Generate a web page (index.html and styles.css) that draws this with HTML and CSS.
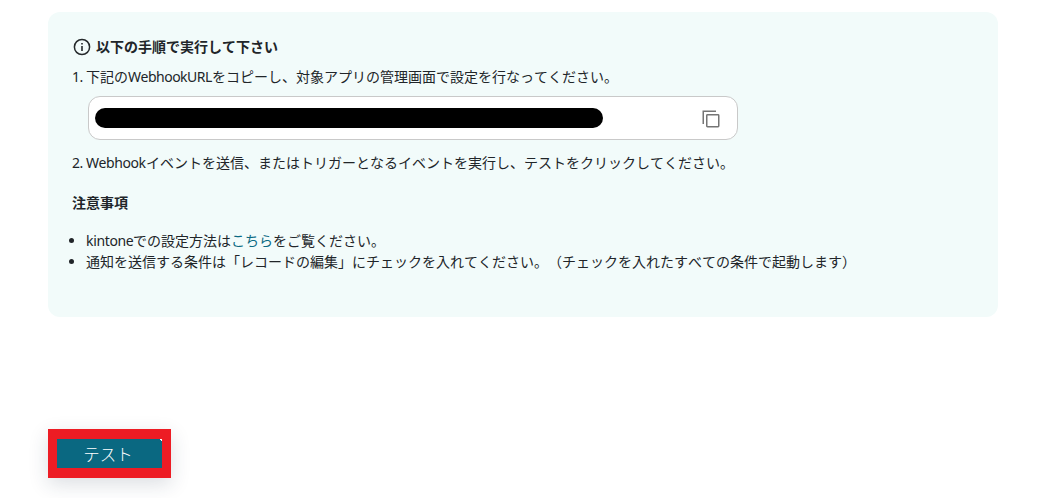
FILE: index.html
```html
<!DOCTYPE html>
<html lang="ja">
<head>
<meta charset="utf-8">
<title>Webhook設定</title>
<link rel="stylesheet" href="styles.css">
</head>
<body>
<main class="page">
  <section class="panel">
    <h2 class="title">
      <svg class="info-icon" viewBox="0 0 18 18" width="18" height="18"><circle cx="9" cy="9" r="7.6" fill="none" stroke="#25292b" stroke-width="1.5"/><path d="M8.2 8h1.6v5H8.2zM8.2 5h1.6v1.6H8.2z" fill="#25292b"/></svg>
      <span>以下の手順で実行して下さい</span>
    </h2>
    <p class="step"><span class="num">1.</span>下記の<span class="latin-url">WebhookURL</span>をコピーし、対象アプリの管理画面で設定を行なってください。</p>
    <div class="url-box">
      <span class="mask"></span>
      <svg class="copy-icon" viewBox="0 0 18 18" width="18" height="18" fill="none" stroke="#757575" stroke-width="1.5"><path d="M1.25 14V1.25H14"/><rect x="4.75" y="4.75" width="12" height="12" rx=".7"/></svg>
    </div>
    <p class="step step-two"><span class="num">2.</span><span class="latin-hook">Webhook</span>イベントを送信、またはトリガーとなるイベントを実行し、テストをクリックしてください。</p>
    <h3 class="subtitle">注意事項</h3>
    <ul class="notes">
      <li><span class="latin-kintone">kintone</span>での設定方法は<a class="link">こちら</a>をご覧ください。</li>
      <li>通知を送信する条件は「レコードの編集」にチェックを入れてください。（チェックを入れたすべての条件で起動します）</li>
    </ul>
  </section>
  <button class="test-button">テスト</button>
</main>
</body>
</html>
```
FILE: styles.css
```css
* { box-sizing: border-box; }
body { margin: 0; background: #fff; color: #212529; font: 14px/21px "Noto Sans", "Noto Sans CJK JP", sans-serif; font-kerning: none; text-spacing-trim: space-all; }
.page { padding: 12px 53px 0 48px; height: 498px; overflow: hidden; }
.panel { height: 305px; padding: 24px; border-radius: 12px; background: #f2fbfa; white-space: nowrap; }
.title { display: flex; align-items: center; gap: 5px; height: 21px; margin: 0 0 9px 1px; font-size: 14px; line-height: 21px; }
.title span { font-family: "Noto Sans CJK JP", sans-serif; }
.step { margin: 0; height: 21px; }
.num, .latin-url, .latin-hook, .latin-kintone { display: inline-block; }
.num { width: 14px; letter-spacing: -.6px; }
.latin-url { width: 84px; letter-spacing: -.5px; }
.latin-hook { width: 60px; letter-spacing: -.45px; }
.latin-kintone { width: 47px; letter-spacing: -.35px; }
.url-box { display: flex; align-items: center; justify-content: space-between; width: 650px; height: 44px; margin: 9px 0 12px 16px; padding: 0 17px 0 6px; border: 1px solid #c9c9c9; border-radius: 12px; background: #fff; }
.mask { width: 508px; height: 20px; border-radius: 10px; background: #000; }
.copy-icon { margin-top: 2px; }
.subtitle { margin: 19px 0 17px; font-size: 14px; line-height: 21px; }
.notes { margin: 0; padding-left: 14px; }
.link { color: #0b6a83; }
.test-button { display: block; width: 123px; height: 49px; margin-top: 112px; padding: 1px 3px 0 0; border: 9px solid #ed1c24; border-top-width: 10px; border-bottom-width: 10px; background: linear-gradient(225deg, #fff 1.5px, #0a6881 2px) padding-box; color: #fff; font: 300 16.5px/28px "Noto Sans CJK JP", sans-serif; box-shadow: 0 6px 20px rgba(33, 52, 75, .16); }
```
